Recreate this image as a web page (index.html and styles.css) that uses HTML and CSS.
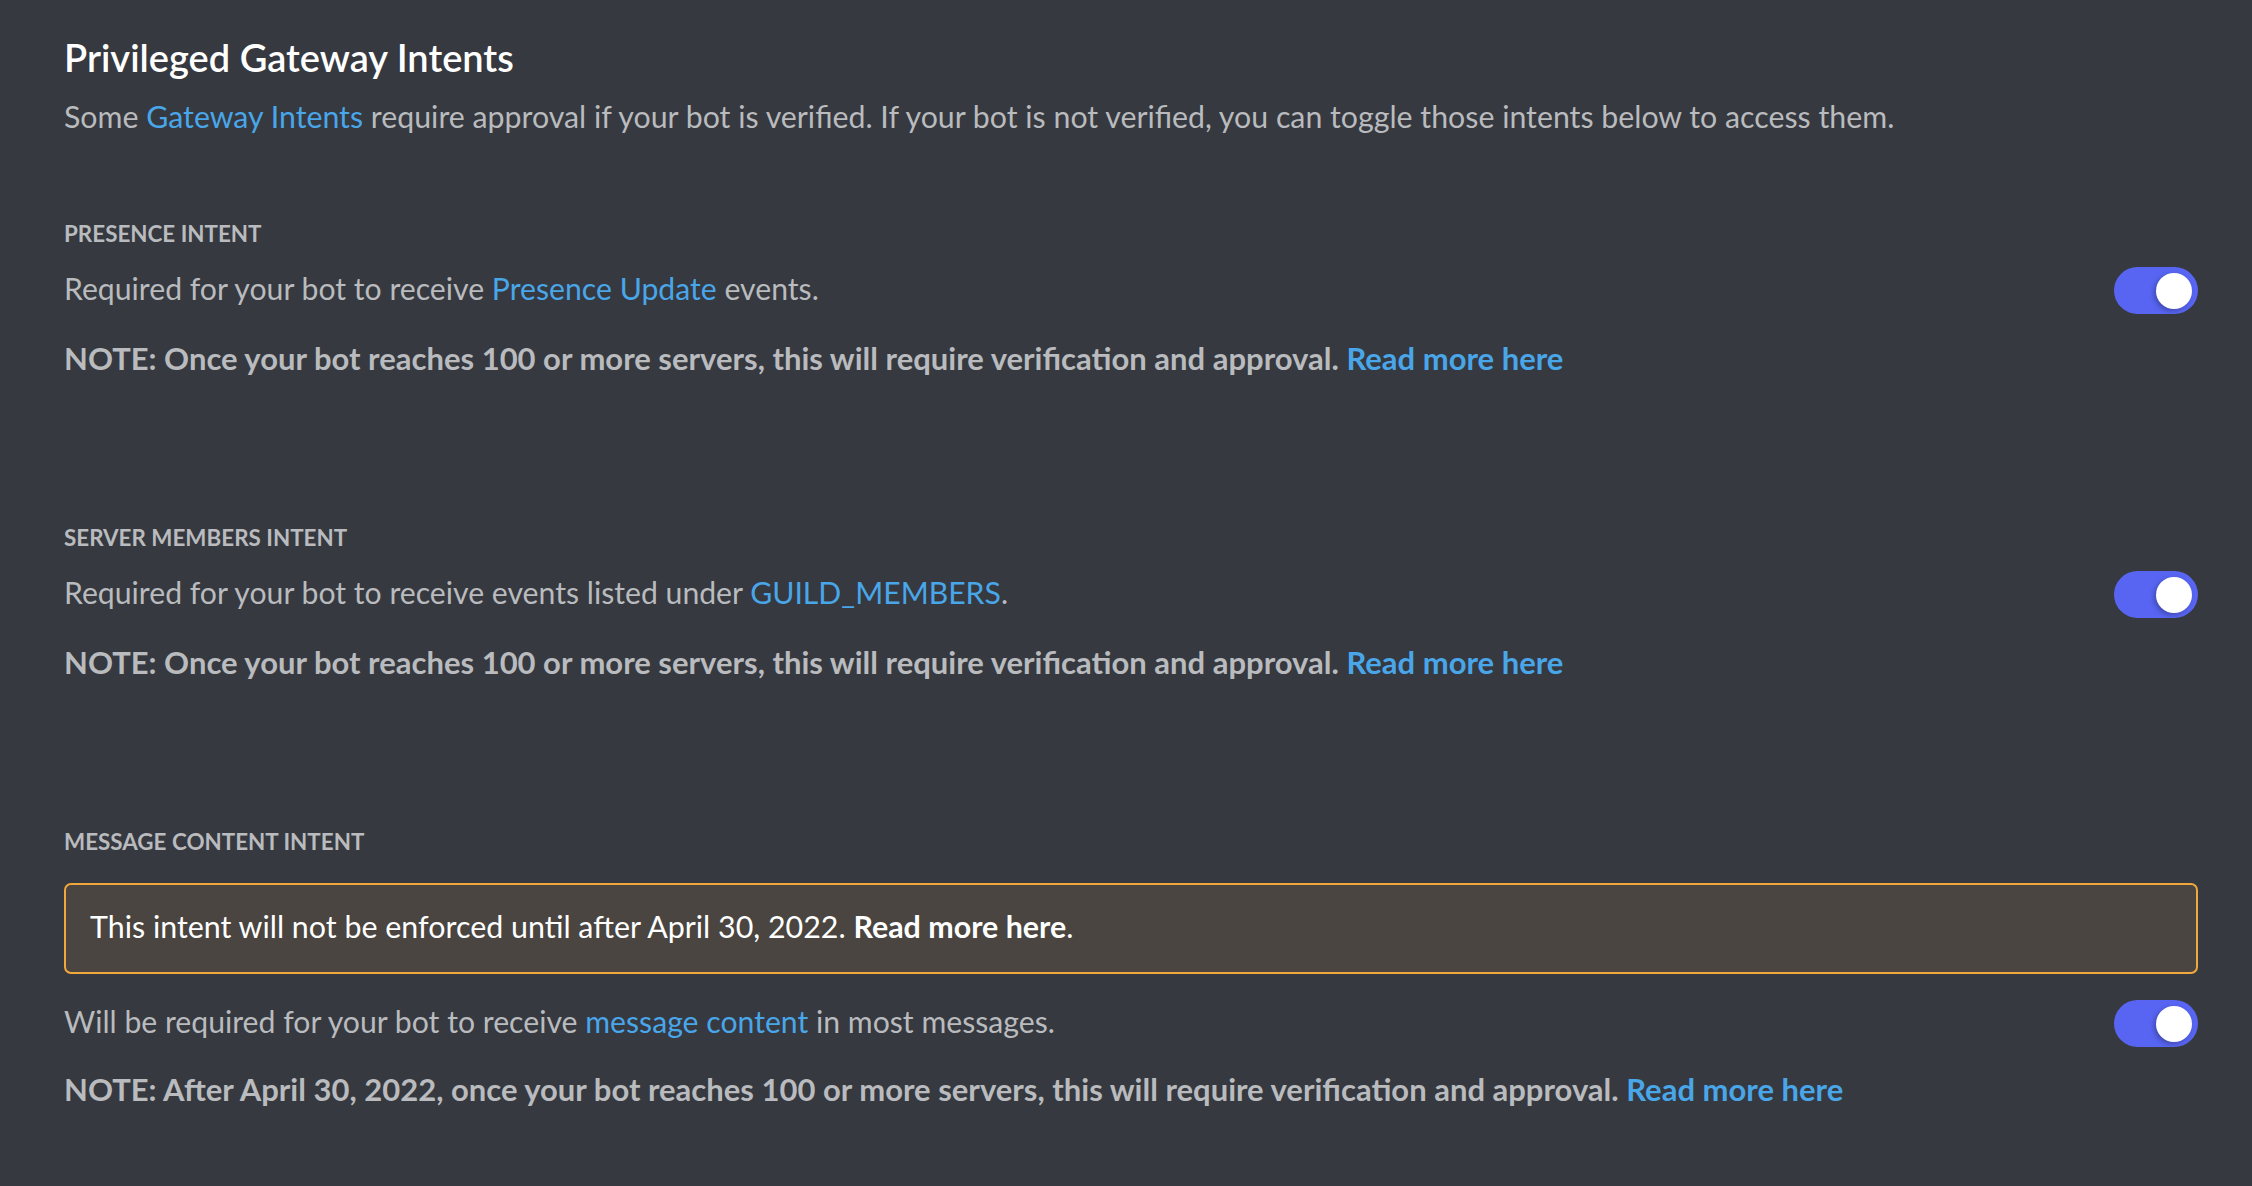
FILE: index.html
```html
<!DOCTYPE html>
<html lang="en">
<head>
<meta charset="utf-8">
<title>Privileged Gateway Intents</title>
<link rel="stylesheet" href="styles.css">
</head>
<body>
<main class="page">
  <h1 class="title">Privileged Gateway Intents</h1>
  <p class="lead">Some <a class="link" href="#">Gateway Intents</a> require approval if your bot is verified. If your bot is not verified, you can toggle those intents below to access them.</p>

  <section class="intent intent-first">
    <h2 class="label">Presence Intent</h2>
    <div class="row">
      <p class="desc">Required for your bot to receive <a class="link" href="#">Presence Update</a> events.</p>
      <span class="toggle"><span class="knob"></span></span>
    </div>
    <p class="note">NOTE: Once your bot reaches 100 or more servers, this will require verification and approval. <a class="link" href="#">Read more here</a></p>
  </section>

  <section class="intent">
    <h2 class="label">Server Members Intent</h2>
    <div class="row">
      <p class="desc">Required for your bot to receive events listed under <a class="link" href="#">GUILD_MEMBERS</a>.</p>
      <span class="toggle"><span class="knob"></span></span>
    </div>
    <p class="note">NOTE: Once your bot reaches 100 or more servers, this will require verification and approval. <a class="link" href="#">Read more here</a></p>
  </section>

  <section class="intent">
    <h2 class="label">Message Content Intent</h2>
    <div class="warning">This intent will not be enforced until after April 30, 2022. <a class="warning-link" href="#">Read more here</a>.</div>
    <div class="row row-after-warning">
      <p class="desc">Will be required for your bot to receive <a class="link" href="#">message content</a> in most messages.</p>
      <span class="toggle"><span class="knob"></span></span>
    </div>
    <p class="note note-last">NOTE: After April 30, 2022, once your bot reaches 100 or more servers, this will require verification and approval. <a class="link" href="#">Read more here</a></p>
  </section>
</main>
</body>
</html>
```
FILE: styles.css
```css
html, body {
  margin: 0;
  padding: 0;
  background: #36393f;
}

body {
  font-family: "Lato", "Open Sans", sans-serif;
  color: #b9bbbe;
  height: 1186px;
  overflow: hidden;
}

.page {
  padding: 33px 54px 0 64px;
}

.title {
  margin: 0;
  font-size: 38px;
  line-height: 48px;
  font-weight: 600;
  color: #ffffff;
}

.lead {
  margin: 15px 0 0;
  font-size: 30.3px;
  line-height: 40px;
  font-weight: 400;
  color: #b9bbbe;
}

.link {
  color: #49a6e9;
  text-decoration: none;
}

.intent {
  margin-top: 146px;
}

.intent-first {
  margin-top: 84px;
}

.label {
  margin: 0;
  font-size: 22.4px;
  line-height: 28px;
  font-weight: 700;
  text-transform: uppercase;
  color: #b9bbbe;
}

.row {
  display: flex;
  align-items: flex-start;
  justify-content: space-between;
  margin-top: 16px;
}

.desc {
  margin: 0;
  font-size: 30.2px;
  line-height: 48px;
  font-weight: 400;
}

.toggle {
  flex: none;
  position: relative;
  width: 84px;
  height: 47px;
  margin-top: 3px;
  border-radius: 24px;
  background: #5865f2;
}

.knob {
  position: absolute;
  top: 5.5px;
  right: 6px;
  width: 36px;
  height: 36px;
  border-radius: 50%;
  background: #ffffff;
  box-shadow: -2px 2px 5px rgba(0, 0, 0, 0.28);
}

.note {
  margin: 24px 0 0;
  font-size: 31px;
  line-height: 40px;
  font-weight: 700;
  color: #b9bbbe;
}

.note-last {
  margin-top: 22px;
}

.warning {
  margin-top: 27px;
  box-sizing: border-box;
  height: 91px;
  padding: 21px 24px 0;
  border: 2px solid #f0a83c;
  border-radius: 7px;
  background: #4a4540;
  color: #ffffff;
  font-size: 30.4px;
  line-height: 40px;
}

.warning-link {
  color: #ffffff;
  font-weight: 700;
  text-decoration: none;
}

.row-after-warning {
  margin-top: 23px;
}
```
